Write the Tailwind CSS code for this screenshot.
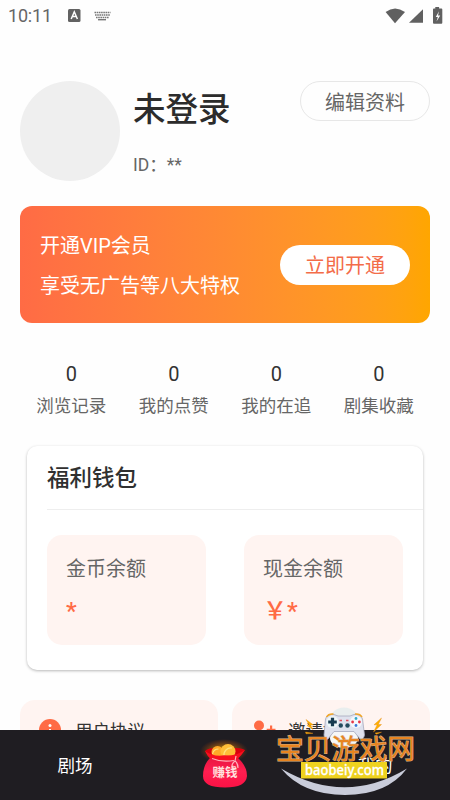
<!DOCTYPE html>
<html lang="zh-CN">
<head>
<meta charset="utf-8">
<title>我的</title>
<script src="https://cdn.jsdelivr.net/npm/@tailwindcss/browser@4"></script>
</head>
<body class="bg-[#fefefe]">
<div class="relative w-[450px] h-[800px] overflow-hidden flex flex-col font-['Roboto','Noto_Sans_CJK_SC',sans-serif] text-[#666]">

  <!-- status bar -->
  <header class="h-[31px] shrink-0 flex items-center pl-[8px] pr-[7px]">
    <span class="text-[18px] leading-[20px] -tracking-[0.2px] text-[#666] w-[60px]">10:11</span>
    <svg class="w-[13px] h-[13px]" viewBox="0 0 13 13"><rect width="12.5" height="13" rx="1.5" fill="#626262"/><path d="M3.2 10 6.3 2.8 9.4 10M4.4 7.6h3.8" fill="none" stroke="#fff" stroke-width="1.5"/></svg>
    <svg class="ml-[13px] w-[17px] h-[10px]" viewBox="0 0 17 10"><path d="M.5 1.5h16M1 4h15M2 6.5h13" stroke="#777" stroke-width="1.6" stroke-dasharray="1.6 .6"/><path d="M4 8.7h8" stroke="#777" stroke-width="1.4"/></svg>
    <svg class="ml-auto w-[58px] h-[18px]" viewBox="0 0 58 18"><path d="M10 16.2.6 5Q10-2.2 20 5Z" fill="#606060"/><path d="M38 2.2v13.6H24Z" fill="#606060"/><path d="M50.3 0h3.8v1.600h2.300q.9 0 .9.9v13.300q0 .9-.9.9h-7.500q-.9 0-.9-.9V2.500q0-.9.9-.9h1.400Z" fill="#606060"/><path d="M54 4.300 50.800 10h2L51.500 14.500l3.700-6h-2.200Z" fill="#fff"/></svg>
  </header>

  <main class="flex flex-col">
    <!-- profile -->
    <section class="mt-[50px] ml-[20px] mr-[20px] h-[100px] flex">
      <div class="size-[100px] rounded-full bg-[#efefef]"></div>
      <div class="ml-[13px] flex flex-col">
        <h1 class="mt-[6px] text-[32.5px] leading-[46px] font-medium text-[#2c2c2c]">未登录</h1>
        <p class="mt-[21px] text-[17.5px] leading-[22px]">ID：**</p>
      </div>
      <button class="ml-auto w-[130px] h-[40px] rounded-full border border-[#e7e7e7] text-[20px] leading-[38px] pt-[2px]">编辑资料</button>
    </section>

    <!-- VIP banner -->
    <section class="mt-[25px] mx-[20px] h-[117px] rounded-[12px] bg-linear-to-r from-[#ff6b45] to-[#ffa600] flex items-center justify-between px-[20px] text-white">
      <div class="text-[20px] leading-[40px] pt-[2px]">
        <p>开通VIP会员</p>
        <p>享受无广告等八大特权</p>
      </div>
      <button class="w-[130px] h-[40px] rounded-full bg-white text-[#f36c49] text-[20px] leading-[38px] pt-[2px]">立即开通</button>
    </section>

    <!-- counters -->
    <section class="mt-[36px] mx-[20px] h-[64px] grid grid-cols-4 text-center text-[17.5px] leading-[28px]">
      <div><b class="block font-normal text-[20px] leading-[30px] mb-[3px] text-[#333]">0</b><span>浏览记录</span></div>
      <div><b class="block font-normal text-[20px] leading-[30px] mb-[3px] text-[#333]">0</b><span>我的点赞</span></div>
      <div><b class="block font-normal text-[20px] leading-[30px] mb-[3px] text-[#333]">0</b><span>我的在追</span></div>
      <div><b class="block font-normal text-[20px] leading-[30px] mb-[3px] text-[#333]">0</b><span>剧集收藏</span></div>
    </section>

    <!-- wallet -->
    <section class="mt-[23px] mx-[27px] h-[224px] rounded-[10px] bg-white shadow-[0_1px_3px_rgba(0,0,0,0.28)] pl-[20px]">
      <h2 class="h-[64px] pt-[12px] text-[22.5px] leading-[41px] font-medium text-[#303030] border-b border-[#eee]">福利钱包</h2>
      <div class="mt-[25px] mr-[20px] flex justify-between">
        <div class="w-[159px] h-[110px] rounded-[15px] bg-[#fff4f1] pl-[19px] pt-[18px]">
          <p class="text-[20px] leading-[32px]">金币余额</p>
          <p class="mt-[10px] text-[24px] leading-[32px] font-medium text-[#ff6b45]">*</p>
        </div>
        <div class="w-[159px] h-[110px] rounded-[15px] bg-[#fff4f1] pl-[19px] pt-[18px]">
          <p class="text-[20px] leading-[32px]">现金余额</p>
          <p class="mt-[10px] text-[24px] leading-[32px] font-medium text-[#ff6b45]">￥*</p>
        </div>
      </div>
    </section>

    <!-- links -->
    <section class="mt-[30px] mx-[20px] h-[60px] grid grid-cols-2 gap-[14px] text-[17.5px] text-[#333]">
      <div class="rounded-[15px] bg-[#fff4f1] flex items-center pl-[19px]">
        <svg class="w-[22px] h-[22px]" viewBox="0 0 22 22"><circle cx="11" cy="11" r="11" fill="#ff6b45"/><circle cx="11" cy="6.600" r="1.500" fill="#fff"/><path d="M11 10v6.500" stroke="#fff" stroke-width="2"/></svg>
        <span class="ml-[14px] pt-[3px]">用户协议</span>
      </div>
      <div class="rounded-[15px] bg-[#fff4f1] flex items-center pl-[20px]">
        <svg class="w-[24px] h-[20px]" viewBox="0 0 24 20"><circle cx="7" cy="5.500" r="5" fill="#ff6b45"/><path d="M0 20q0-8 7-8t7 8ZM18 5.500h2.200v3.300H23.500V11h-3.300v3.300H18V11h-3.300V8.800H18Z" fill="#ff6b45"/></svg>
        <span class="ml-[12px] pt-[3px]">邀请好友</span>
      </div>
    </section>
  </main>

  <!-- tab bar -->
  <nav class="absolute left-0 bottom-0 w-full h-[70px] bg-[#1f1d22] grid grid-cols-3 justify-items-center items-center text-[17.500px] leading-[24px] text-white">
    <span class="pt-[2px]">剧场</span>
    <svg class="w-[56px] h-[52px] overflow-visible" viewBox="0 0 56 52">
      <defs>
        <radialGradient id="glow"><stop offset=".3" stop-color="#ffab00" stop-opacity=".55"/><stop offset="1" stop-color="#ff5000" stop-opacity="0"/></radialGradient>
        <linearGradient id="bag" x2="0" y2="1"><stop stop-color="#e5153f"/><stop offset=".5" stop-color="#ff1e50"/><stop offset="1" stop-color="#fa1245"/></linearGradient>
      </defs>
      <ellipse cx="27" cy="12" rx="24" ry="12" fill="url(#glow)"/>
      <path d="M8 12Q12 8 27 9 43 8 48 11L40 21H14Z" fill="#d9000d"/>
      <circle cx="20.500" cy="13" r="6" fill="#ffa927"/><circle cx="31" cy="12.500" r="7.500" fill="#ffbd38"/>
      <path d="M27 17a7 7 0 0 1 8-8M15.500 15q1-5 6-5" fill="none" stroke="#ffe07b" stroke-width="1.200"/>
      <path d="M13 19Q27 14 41 19 50 27 50 37 49 48.500 28 48.500 6 48.500 6 37 6 26 13 19Z" fill="url(#bag)"/>
      <path d="M8 12Q16 18 27 16.500 40 17 48 11 44 17 40 20.500 27 23 14 20 10 17 8 12Z" fill="#f70f20"/>
      <path d="M15 19.500q10 4 22 2M38 22q-4 3-3 7M38 22q3 2 3 7M38 22l1-5" fill="none" stroke="#ffb2bb" stroke-width="1.200"/>
      <text x="28" y="37.500" text-anchor="middle" font-family="Noto Sans CJK SC" font-size="12.500" font-weight="700" fill="#ffe2df">赚钱</text>
    </svg>
    <span class="pt-[2px]">我的</span>
  </nav>

  <!-- site badge -->
  <svg class="absolute left-[270px] top-[700px] w-[150px] h-[100px]" viewBox="270 700 150 100">
    <circle cx="344" cy="723" r="15.500" fill="#e9eeee"/>
    <path d="M281 768.500Q345 806 407 768.500 387 795 345 795 303 795 281 768.500Z" fill="#c9ccda"/>
    <ellipse cx="344" cy="738" rx="14" ry="10" fill="#f7f7f7"/>
    <path d="M325.500 719Q327 713.500 334 714.500L338 716H350L354 714.500Q361 713.500 362.500 719L364.500 735Q363.500 740 360 739L354 731.500H334L328 739Q324.500 740 324 735Z" fill="#dfe2ee" stroke="#a6aabd" stroke-width=".8"/>
    <path d="M326.500 717q2-3.500 7-3M355 714q5-.5 7 3" stroke="#f0a629" stroke-width="1.500" fill="none"/>
    <circle cx="332.500" cy="722" r="6" fill="#eef7f8"/><path d="M332.500 717.700v8.600M328.200 722h8.600" stroke="#173b50" stroke-width="3.200"/>
    <circle cx="356" cy="722" r="6" fill="#f5f7fb"/><circle cx="356" cy="718.500" r="1.400" fill="#31aac8"/><circle cx="352.600" cy="722" r="1.400" fill="#e73545"/><circle cx="359.400" cy="722" r="1.400" fill="#e73545"/><circle cx="356" cy="725.500" r="1.400" fill="#3a79da"/>
    <circle cx="340.800" cy="725.500" r="2.200" fill="#244b5e"/><circle cx="347.500" cy="725.500" r="2.200" fill="#244b5e"/><path d="M339.500 720.500h2.500M346 720.500h2.500" stroke="#e04e5c" stroke-width="1.300"/>
    <g fill="#ffb000" stroke="#e48b16" stroke-width=".4"><path d="M381.500 718 374 724.800h3.200L373.500 732 381.500 724.500h-3.200ZM306 719.500l7.500 5.500h-3l2.500 4.500-6-4h2.500Z"/><path d="M305.500 732l7.500 1.300-7 .5ZM375 733l6.500-.8-5 2Z"/></g>
    <text x="345.500" y="759" text-anchor="middle" textLength="139" lengthAdjust="spacingAndGlyphs" font-family="Noto Sans CJK SC" font-size="27" font-weight="400" fill="#e88420" stroke="#d9b48a" stroke-width="1" paint-order="stroke">宝贝游戏网</text>
    <rect x="301" y="762" width="86" height="16.500" fill="#efd21f"/>
    <text x="344.500" y="774.500" text-anchor="middle" textLength="79" lengthAdjust="spacingAndGlyphs" font-family="Noto Sans, sans-serif" font-size="14.500" font-weight="500" fill="#fff" stroke="#fff" stroke-width=".3">baobeiy.com</text>
  </svg>
</div>
</body>
</html>
